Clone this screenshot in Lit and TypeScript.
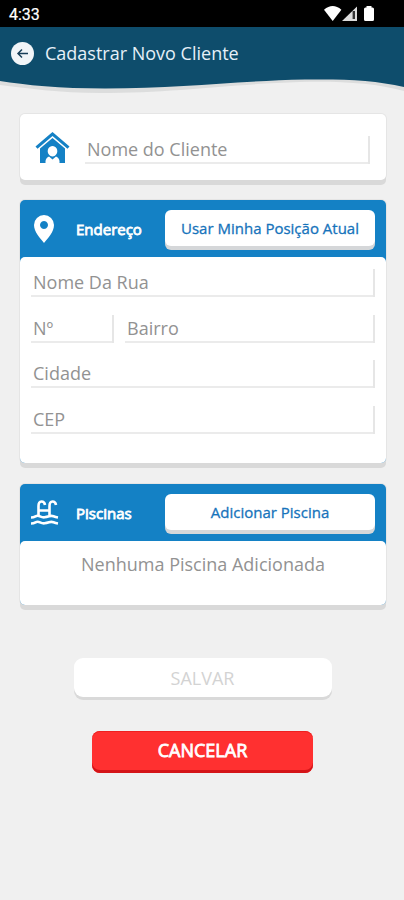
import { LitElement, html, css } from "lit";
import { customElement, property } from "lit/decorators.js";

@customElement("form-field")
class FormField extends LitElement {
  @property() label = "";

  static styles = css`
    :host {
      display: block;
      min-width: 0;
    }
    .field {
      box-sizing: border-box;
      height: 28px;
      padding-left: 2px;
      border-bottom: 2px solid #ebebeb;
      position: relative;
      font-size: 18px;
      line-height: 27px;
      color: #929292;
      white-space: nowrap;
    }
    .field::after {
      content: "";
      position: absolute;
      right: 0;
      top: 0;
      bottom: -2px;
      width: 2px;
      background: #e6e6e6;
    }
  `;

  render() {
    return html`<div class="field">${this.label}</div>`;
  }
}

@customElement("app-root")
class AppRoot extends LitElement {
  static styles = css`
    :host {
      display: block;
      height: 900px;
      overflow: hidden;
      background: #f0f0f0;
      font-family: "Open Sans", "Noto Sans", sans-serif;
    }
    svg {
      display: block;
    }
    .status {
      height: 27px;
      background: #000;
      color: #fff;
      display: flex;
      justify-content: space-between;
      box-sizing: border-box;
      padding: 0 29px 0 9px;
      font: 400 16px/29px Roboto, sans-serif;
      -webkit-text-stroke: 0.2px #fff;
    }
    .top {
      height: 87px;
      position: relative;
    }
    .wave {
      position: absolute;
      left: 0;
      top: 0;
    }
    .title {
      position: relative;
      display: flex;
      align-items: center;
      height: 52px;
      padding-left: 11px;
      gap: 11px;
      color: #e6f0f8;
      font-size: 18px;
      white-space: nowrap;
    }
    .card {
      width: 366px;
      box-sizing: border-box;
      margin: 0 0 14px 20px;
      border-radius: 5px;
      background: #fff;
      box-shadow: 0 5px 0 #d9d9d9, 0 0 0 1px #e5e5e5;
    }
    .client {
      height: 66px;
      margin-bottom: 20px;
      display: flex;
      padding: 21px 16px 0 15px;
      gap: 15px;
    }
    .house {
      margin-top: -4px;
    }
    .client form-field {
      flex: 1;
      padding-top: 1px;
    }
    .blue {
      background: #1481c5;
    }
    .address {
      height: 263px;
      margin-bottom: 21px;
    }
    .pools {
      height: 121px;
    }
    .head {
      height: 57px;
      display: flex;
      align-items: center;
      box-sizing: border-box;
      padding: 0 11px 0 9px;
    }
    .head svg {
      flex: none;
    }
    .head b {
      width: 89px;
      margin-left: 16px;
      color: #fff;
      font-size: 15px;
      font-weight: 400;
      -webkit-text-stroke: 0.8px #fff;
    }
    .mini {
      flex: 1;
      height: 36px;
      margin-bottom: 1px;
      border-radius: 6px;
      background: #fff;
      box-shadow: 0 4px 0 #d5d7d9;
      color: #1673bb;
      font-size: 15px;
      -webkit-text-stroke: 0.3px #1673bb;
      line-height: 37px;
      text-align: center;
      white-space: nowrap;
    }
    .body {
      background: #fff;
      border-radius: 5px;
      box-sizing: border-box;
      padding: 12px 11px 0;
      color: #929292;
    }
    .address .body {
      height: 206px;
      display: grid;
      grid-template-columns: 83px 250px;
      column-gap: 11px;
      grid-auto-rows: 45.7px;
    }
    .wide {
      grid-column: 1 / 3;
    }
    .pools .body {
      height: 64px;
      padding-top: 11px;
      text-align: center;
      font-size: 18px;
      line-height: 25px;
    }
    .actions {
      display: flex;
      flex-direction: column;
      align-items: center;
      gap: 34px;
      padding: 39px 0 0 1px;
    }
    .save,
    .cancel {
      text-align: center;
      font-size: 18px;
      box-sizing: border-box;
    }
    .save {
      width: 258px;
      height: 39px;
      border-radius: 9px;
      background: #fff;
      box-shadow: 0 3px 0 #d9d9d9;
      color: #d3d3d3;
      line-height: 41px;
    }
    .cancel {
      width: 221px;
      height: 42px;
      border-radius: 8px;
      background: #ff3030;
      box-shadow: inset 0 -3px 0 #d41418, inset 0 1px 0 #ee2020;
      color: #fff;
      -webkit-text-stroke: 0.8px #fff;
      line-height: 39px;
    }
  `;

  render() {
    return html`
      <div class="status">
        <span>4:33</span>
        <svg width="52" height="27" viewBox="323 0 52 27" fill="#fff">
          <path d="M324 9.8q8.700-7.500 17.400 0L332.700 21z" />
          <path d="M357 6.500V21H342z" fill="#dcdcdc" />
          <path d="M353.800 11v8" stroke="#333" stroke-width="2.400" />
          <path d="M366.500 6h5v1.500h1q1.500 0 1.500 1.500v10.500q0 1.500-1.500 1.500h-7q-1.500 0-1.500-1.500V9q0-1.500 1.500-1.500h1z" />
        </svg>
      </div>
      <div class="top">
        <svg class="wave" width="404" height="72" viewBox="0 27 404 72">
          <path d="M0 27H404V91C375 83 340 81 300 82C230 84 175 93 100 93C60 93 25 88 0 85Z" fill="#dcdddd" />
          <path d="M0 27H404V87C375 80 345 79 305 79.500C235 81 180 88.500 105 88.500C60 88.500 25 85 0 81Z" fill="#0e4d6c" />
        </svg>
        <div class="title">
          <svg width="23" height="23" viewBox="0 0 23 23">
            <circle cx="11.500" cy="11.500" r="11.500" fill="#f1f5f8" />
            <path d="M17 11.500H7M11 7.500l-4 4 4 4" fill="none" stroke="#183f58" stroke-width="1.500" />
          </svg>
          <span>Cadastrar Novo Cliente</span>
        </div>
      </div>

      <div class="card client">
        <svg class="house" width="35" height="32" viewBox="0 0 35 32" fill="#1481c5">
          <path d="M17.500 1L34.500 15.500 32.500 17.800 17.500 5 2.500 17.800.5 15.500z" />
          <path fill-rule="evenodd" d="M17.500 7L30 17.500V32H24.500V30Q24 26.500 21 25.500L17.500 28.500 14 25.500Q11 26.500 10.500 30V32H5V17.500zM17.500 15a4.800 5.200 0 1 0 .01 0z" />
        </svg>
        <form-field label="Nome do Cliente"></form-field>
      </div>

      <div class="card blue address">
        <div class="head">
          <svg width="31" height="28" viewBox="0 0 31 28">
            <path fill="#fff" fill-rule="evenodd" d="M15 0a10 10 0 0 1 10 10C25 17 19 23 15 28 11 23 5 17 5 10A10 10 0 0 1 15 0zM15 6a4 4 0 1 0 .01 0z" />
          </svg>
          <b>Endereço</b>
          <div class="mini">Usar Minha Posição Atual</div>
        </div>
        <div class="body">
          <form-field class="wide" label="Nome Da Rua"></form-field>
          <form-field label="Nº"></form-field>
          <form-field label="Bairro"></form-field>
          <form-field class="wide" label="Cidade"></form-field>
          <form-field class="wide" label="CEP"></form-field>
        </div>
      </div>

      <div class="card blue pools">
        <div class="head">
          <svg width="31" height="28" viewBox="0 0 31 28" fill="none" stroke="#fff" stroke-width="2.600">
            <path d="M9.500 16V7Q9.500 2.500 12.500 2.500T16 6M20.500 16V7Q20.500 2.500 23.500 2.500T27 6M9.500 11.500H20.500" />
            <path d="M2 18.500Q4.500 18.500 6.500 17.300T11 17.300 15.500 18.300 20 17.300 24.500 17.300 29 18.500M2 24.500Q4.500 24.500 6.500 23.300T11 23.300 15.500 24.300 20 23.300 24.500 23.300 29 24.500" />
          </svg>
          <b>Piscinas</b>
          <div class="mini">Adicionar Piscina</div>
        </div>
        <div class="body">Nenhuma Piscina Adicionada</div>
      </div>

      <div class="actions">
        <div class="save">SALVAR</div>
        <div class="cancel">CANCELAR</div>
      </div>
    `;
  }
}
